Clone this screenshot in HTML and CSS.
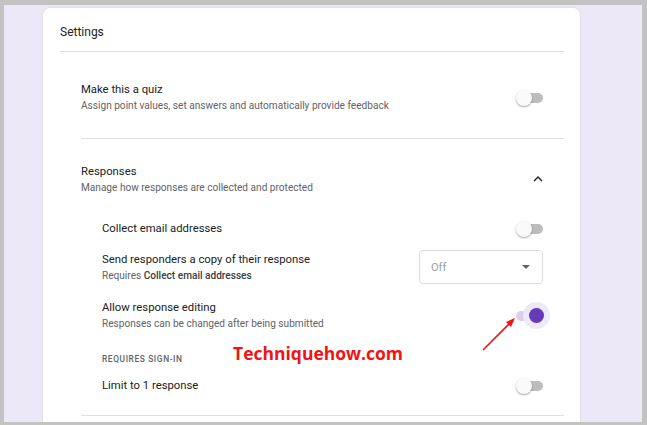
FILE: index.html
```html
<!DOCTYPE html>
<html>
<head>
    <title>Settings</title>
    <link rel="stylesheet" href="styles.css">
</head>
<body>
    <div class="frame">
        <div class="card">
            <div class="card-title">Settings</div>

            <div class="section quiz">
                <div class="row">
                    <div class="text">
                        <div class="title">Make this a quiz</div>
                        <div class="sub">Assign point values, set answers and automatically provide feedback</div>
                    </div>
                    <span class="toggle"></span>
                </div>
            </div>

            <div class="section responses">
                <div class="row head">
                    <div class="text">
                        <div class="title">Responses</div>
                        <div class="sub">Manage how responses are collected and protected</div>
                    </div>
                    <svg class="chevron" viewBox="0 0 24 24" width="18" height="18">
                        <path d="M7.41 15.41L12 10.83l4.59 4.58L18 14l-6-6-6 6z" fill="#202124"/>
                    </svg>
                </div>

                <div class="items">
                    <div class="row item">
                        <div class="title">Collect email addresses</div>
                        <span class="toggle"></span>
                    </div>
                    <div class="row item">
                        <div class="text">
                            <div class="title">Send responders a copy of their response</div>
                            <div class="sub">Requires <b>Collect email addresses</b></div>
                        </div>
                        <div class="select">
                            <span>Off</span>
                            <span class="caret"></span>
                        </div>
                    </div>
                    <div class="row item">
                        <div class="text">
                            <div class="title">Allow response editing</div>
                            <div class="sub">Responses can be changed after being submitted</div>
                        </div>
                        <span class="toggle on"></span>
                    </div>
                    <div class="label">REQUIRES SIGN-IN</div>
                    <div class="row item">
                        <div class="title">Limit to 1 response</div>
                        <span class="toggle"></span>
                    </div>
                </div>
            </div>
        </div>

        <div class="watermark">Techniquehow.com</div>
        <svg class="arrow" width="40" height="40" viewBox="0 0 40 40">
            <line x1="4" y1="35" x2="33" y2="6" stroke="#f01414" stroke-width="1.6"/>
            <polygon points="36,3 27,7 32,12" fill="#f01414"/>
        </svg>
    </div>
</body>
</html>
```

FILE: styles.css
```css
body {
    margin: 0;
    background-color: #c3c3c3;
    font-family: Roboto, Arial, sans-serif;
    color: #202124;
}

.frame {
    position: relative;
    height: 417px;
    margin: 5px 5px 3px 4px;
    background-color: #ede8f7;
    overflow: hidden;
    padding-top: 2px;
    box-sizing: border-box;
}

.card {
    width: 539px;
    height: 440px;
    margin-left: 38px;
    padding: 0 16px 0 17px;
    box-sizing: border-box;
    background-color: #fff;
    border: 1px solid #e2dfe8;
    border-radius: 8px;
}

.card-title {
    padding: 16px 0 11px;
    line-height: 16px;
    font-size: 12px;
    border-bottom: 1px solid #e0e0e0;
}

.section {
    margin-left: 21px;
    border-bottom: 1px solid #e0e0e0;
}

.quiz {
    padding: 30px 21px 25px 0;
}

.responses {
    padding: 25px 0 21px 0;
}

.row {
    display: flex;
    align-items: center;
    justify-content: space-between;
}

.head {
    padding-right: 17px;
}

.title {
    font-size: 11.3px;
    line-height: 16px;
}

.sub {
    font-size: 10.1px;
    line-height: 15px;
    color: #5f6368;
}

.sub b {
    font-weight: 500;
    color: #3c4043;
}

.chevron {
    margin-top: -2px;
}

.items {
    margin-left: 21px;
    margin-right: 21px;
    padding-top: 26px;
}

.item {
    margin-bottom: 16px;
}

.item:first-child {
    margin-bottom: 13px;
}

.label {
    font-size: 8.4px;
    font-weight: 500;
    letter-spacing: 0.6px;
    color: #5f6368;
    line-height: 12px;
    margin: 22px 0 13px;
}

.item:last-child {
    margin-bottom: 0;
}

.select {
    width: 124px;
    height: 34px;
    box-sizing: border-box;
    border: 1px solid #dadce0;
    border-radius: 4px;
    display: flex;
    align-items: center;
    justify-content: space-between;
    padding: 0 12px 0 11px;
    font-size: 11px;
    color: #9e9e9e;
}

.caret {
    width: 0;
    height: 0;
    border-left: 4px solid transparent;
    border-right: 4px solid transparent;
    border-top: 4px solid #5f6368;
}

.toggle {
    position: relative;
    width: 27px;
    height: 16px;
    flex-shrink: 0;
}

.toggle::before {
    content: "";
    position: absolute;
    right: 0;
    top: 3px;
    width: 22px;
    height: 10px;
    border-radius: 5px;
    background-color: #bdbdbd;
}

.toggle::after {
    content: "";
    position: absolute;
    left: 0;
    top: 0;
    width: 16px;
    height: 16px;
    border-radius: 50%;
    background-color: #fafafa;
    box-shadow: 0 1px 2px rgba(0, 0, 0, 0.35);
}

.toggle.on::before {
    left: 0;
    right: auto;
    width: 22px;
    background-color: #d9cfee;
}

.toggle.on::after {
    left: auto;
    right: -1px;
    width: 15px;
    height: 15px;
    background-color: #673ab7;
    box-shadow: 0 0 0 6px #eee9f8;
}

.watermark {
    position: absolute;
    left: 229px;
    top: 336px;
    font-family: "Open Sans", Arial, sans-serif;
    font-weight: bold;
    font-size: 17.5px;
    color: #f01414;
}

.arrow {
    position: absolute;
    left: 475px;
    top: 310px;
}
```
